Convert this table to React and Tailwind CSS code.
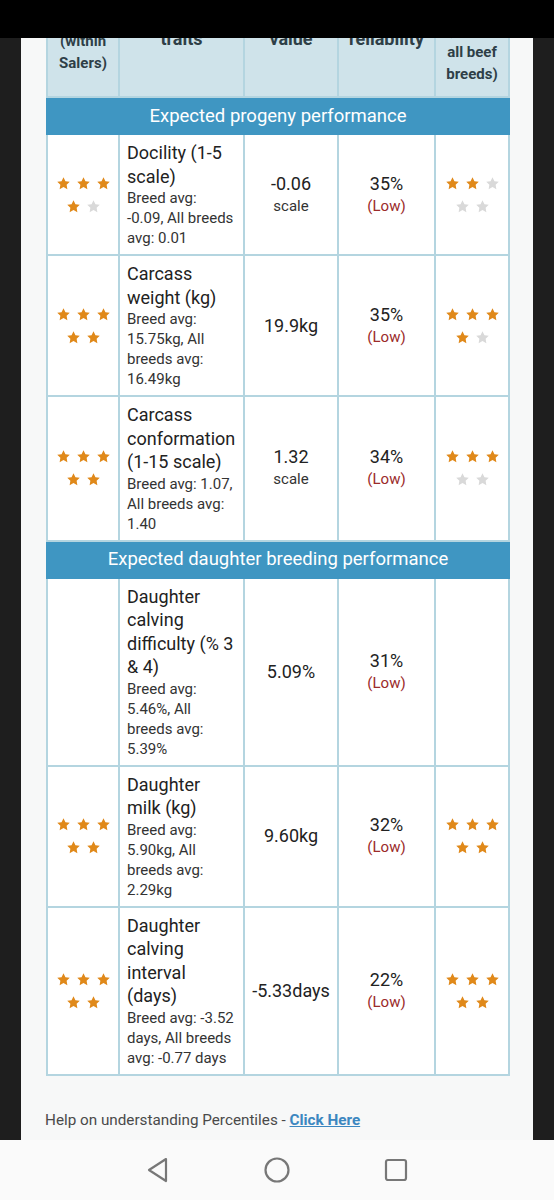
import React from 'react';

const STAR = 'M12 2l3.09 6.26L22 9.27l-5 4.87 1.18 6.88L12 17.77l-6.18 3.25L7 14.14 2 9.27l6.91-1.01L12 2z';

function Stars({ count }) {
  if (count == null) return null;
  return (
    <div className="mx-auto flex w-[60px] flex-wrap justify-center gap-x-[5px] gap-y-[8px]">
      {[0, 1, 2, 3, 4].map((i) => (
        <svg key={i} viewBox="0 0 24 24" className="h-[15px] w-[15px]">
          <path d={STAR} fill={i < count ? '#e0891a' : '#d9d9d9'} />
        </svg>
      ))}
    </div>
  );
}

const progeny = [
  { left: 4, right: 2, title: 'Docility (1-5 scale)', sub: 'Breed avg: -0.09, All breeds avg: 0.01', value: '-0.06', unit: 'scale', rel: '35%' },
  { left: 5, right: 4, title: 'Carcass weight (kg)', sub: 'Breed avg: 15.75kg, All breeds avg: 16.49kg', value: '19.9kg', rel: '35%' },
  { left: 5, right: 3, title: 'Carcass conformation (1-15 scale)', sub: 'Breed avg: 1.07, All breeds avg: 1.40', value: '1.32', unit: 'scale', rel: '34%' },
];

const daughter = [
  { left: null, right: null, title: 'Daughter calving difficulty (% 3 & 4)', sub: 'Breed avg: 5.46%, All breeds avg: 5.39%', value: '5.09%', rel: '31%' },
  { left: 5, right: 5, title: 'Daughter milk (kg)', sub: 'Breed avg: 5.90kg, All breeds avg: 2.29kg', value: '9.60kg', rel: '32%' },
  { left: 5, right: 5, title: 'Daughter calving interval (days)', sub: 'Breed avg: -3.52 days, All breeds avg: -0.77 days', value: '-5.33days', rel: '22%' },
];

const cell = 'border-2 border-[#b4d5e0] bg-white';

function Row({ r }) {
  return (
    <tr>
      <td className={`${cell} align-middle`}>
        <Stars count={r.left} />
      </td>
      <td className={`${cell} py-[6px] pl-[7px] pr-[9px] align-top`}>
        <div className="text-[18px] leading-[23.5px] text-[#222]">{r.title}</div>
        <div className="text-[15px] leading-[20px] text-[#333]">{r.sub}</div>
      </td>
      <td className={`${cell} text-center align-middle`}>
        <div className="text-[18px] leading-[22px] text-[#222]">{r.value}</div>
        {r.unit && <div className="text-[15px] leading-[22px] text-[#333]">{r.unit}</div>}
      </td>
      <td className={`${cell} text-center align-middle`}>
        <div className="text-[18px] leading-[22px] text-[#222]">{r.rel}</div>
        <div className="text-[15px] leading-[22px] text-[#9b2b2b]">(Low)</div>
      </td>
      <td className={`${cell} align-middle`}>
        <Stars count={r.right} />
      </td>
    </tr>
  );
}

function Band({ children }) {
  return (
    <tr>
      <td colSpan={5} className="h-[37px] border-2 border-[#3f96c2] bg-[#3f96c2] text-center text-[18.5px] leading-[24px] text-white">
        {children}
      </td>
    </tr>
  );
}

export default function App() {
  return (
    <div className="relative h-[1200px] w-[554px] overflow-hidden bg-[#1e1e1e] font-['Roboto',sans-serif]">
      {/* status bar overlays the scrolled page */}
      <div className="absolute left-0 top-0 z-10 h-[38px] w-full bg-black" />

      <div className="flex h-[1140px] flex-col">
        <div className="mx-[21px] flex-1 overflow-hidden bg-[#f7f8f8]">
          <table className="ml-[25px] mt-[-16px] w-[462px] table-fixed border-collapse">
            <colgroup>
              <col className="w-[72px]" />
              <col className="w-[125px]" />
              <col className="w-[94px]" />
              <col className="w-[97px]" />
              <col className="w-[74px]" />
            </colgroup>
            <thead>
              <tr className="h-[112px] bg-[#cfe3ea] font-bold text-[#2e3f47]">
                <th className="border-2 border-[#b4d5e0] text-center align-middle text-[15px] leading-[22px]">
                  Percentile<br />(within<br />Salers)
                </th>
                <th className="border-2 border-[#b4d5e0] pb-[45px] text-center align-bottom text-[18px] leading-[24px]">
                  Index<br />traits
                </th>
                <th className="border-2 border-[#b4d5e0] pb-[45px] text-center align-bottom text-[18px] leading-[24px]">
                  Index<br />value
                </th>
                <th className="border-2 border-[#b4d5e0] pb-[45px] text-center align-bottom text-[18px] leading-[24px]">
                  Index<br />reliability
                </th>
                <th className="border-2 border-[#b4d5e0] text-center align-middle text-[15px] leading-[22px]">
                  Percentile<br />(across<br />all beef<br />breeds)
                </th>
              </tr>
            </thead>
            <tbody>
              <Band>Expected progeny performance</Band>
              {progeny.map((r) => (
                <Row key={r.title} r={r} />
              ))}
              <Band>Expected daughter breeding performance</Band>
              {daughter.map((r) => (
                <Row key={r.title} r={r} />
              ))}
            </tbody>
          </table>

          <p className="ml-[24px] mt-[34px] text-[15.25px] leading-[20px] text-[#4a4a4a]">
            Help on understanding Percentiles -{' '}
            <a href="#" className="font-bold text-[#3c87c0] underline">
              Click Here
            </a>
          </p>
        </div>
      </div>

      {/* android nav bar */}
      <div className="flex h-[60px] items-center justify-center gap-[94px] bg-[#fafafa]">
        <svg width="24" height="26" viewBox="0 0 24 26">
          <path d="M20 2 L3 13 L20 24 Z" fill="none" stroke="#777" strokeWidth="2.2" strokeLinejoin="round" />
        </svg>
        <svg width="26" height="26" viewBox="0 0 26 26">
          <circle cx="13" cy="13" r="11.5" fill="none" stroke="#777" strokeWidth="2.2" />
        </svg>
        <svg width="24" height="24" viewBox="0 0 24 24">
          <rect x="2" y="2" width="20" height="20" rx="2" fill="none" stroke="#777" strokeWidth="2.2" />
        </svg>
      </div>
    </div>
  );
}
